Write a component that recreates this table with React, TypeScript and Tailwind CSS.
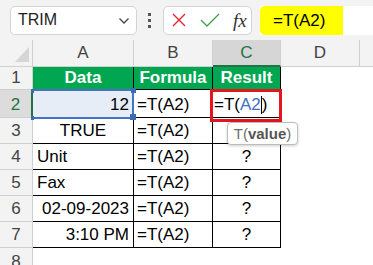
import React from "react";

const font = { fontFamily: '"Liberation Sans", Arial, sans-serif' };

type Row = { n: string; a: string; align: "left" | "center" | "right"; c: string; h: string };

const rows: Row[] = [
  { n: "3", a: "TRUE", align: "center", c: "", h: "h-[26px]" },
  { n: "4", a: "Unit", align: "left", c: "?", h: "h-[26px]" },
  { n: "5", a: "Fax", align: "left", c: "?", h: "h-[26px]" },
  { n: "6", a: "02-09-2023", align: "right", c: "?", h: "h-[26px]" },
  { n: "7", a: "3:10 PM", align: "right", c: "?", h: "h-[26px]" },
];

const alignCls = {
  left: "justify-start pl-[4px]",
  center: "justify-center",
  right: "justify-end pr-[4px]",
};

export default function App() {
  return (
    <div className="w-[373px] h-[265px] overflow-hidden bg-white text-black" style={font}>
      {/* Toolbar */}
      <div className="h-[40px] bg-[#f3f3f3] flex items-center pl-[10px]">
        <div className="w-[127px] h-[29px] bg-white border border-[#d4d4d4] rounded-[5px] flex items-center justify-between pl-[7px] pr-[6px]">
          <span className="text-[16px] leading-none text-[#222]">TRIM</span>
          <svg width="12" height="8" viewBox="0 0 12 8" className="mt-[2px]">
            <path d="M1.5 1.5 L6 6 L10.5 1.5" fill="none" stroke="#444" strokeWidth="1.3" />
          </svg>
        </div>
        <div className="ml-[10px] w-[4px] flex flex-col items-center gap-[3px]">
          <span className="w-[3px] h-[3px] bg-[#555] block" />
          <span className="w-[3px] h-[3px] bg-[#555] block" />
          <span className="w-[3px] h-[3px] bg-[#555] block" />
        </div>
        <div className="ml-[12px] w-[89px] h-[29px] bg-white border border-[#d4d4d4] rounded-[5px] flex items-center pl-[8px]">
          <svg width="14" height="14" viewBox="0 0 14 14">
            <path d="M1 1 L13 13 M13 1 L1 13" stroke="#e3262d" strokeWidth="1.4" />
          </svg>
          <svg width="20" height="14" viewBox="0 0 20 14" className="ml-[14px]">
            <path d="M1 7 L7 13 L19 1" fill="none" stroke="#3fa24b" strokeWidth="1.3" />
          </svg>
          <span
            className="ml-[13px] text-[19px] leading-none italic text-[#333]"
            style={{ fontFamily: '"Liberation Serif", "Times New Roman", serif' }}
          >
            fx
          </span>
        </div>
        <div className="ml-[8px] flex-1 h-[29px] bg-white flex">
          <div className="w-[83px] h-full bg-[#ffff00] rounded-l-[5px] flex items-center pl-[13px]">
            <span className="text-[17px] leading-none">=T(A2)</span>
          </div>
        </div>
      </div>

      {/* Column headers */}
      <div className="flex h-[27px] bg-[#f3f3f3] text-[17px] text-[#444]">
        <div className="w-[33px] h-full border-r border-b border-[#d0d0d0] relative">
          <svg width="14" height="15" viewBox="0 0 14 15" className="absolute right-[3px] bottom-[4px]">
            <path d="M14 0 L14 15 L0 15 Z" fill="#d6d6d6" />
          </svg>
        </div>
        <div className="w-[101px] h-full border-r border-b border-[#d0d0d0] flex items-center justify-center">A</div>
        <div className="w-[79px] h-full border-r border-b border-[#d0d0d0] flex items-center justify-center">B</div>
        <div className="w-[68px] h-full border-r border-[#d0d0d0] border-b-2 border-b-[#217346] bg-[#d6d6d6] text-[#217346] flex items-center justify-center">
          C
        </div>
        <div className="w-[79px] h-full border-r border-b border-[#d0d0d0] flex items-center justify-center">D</div>
        <div className="flex-1 h-full border-b border-[#d0d0d0]" />
      </div>

      {/* Row 1 */}
      <div className="flex h-[23px] text-[17px] leading-[20px]">
        <div className="w-[33px] h-full bg-[#f3f3f3] border-r border-b border-[#d0d0d0] text-[#444] flex items-end justify-center pb-[1px]">
          1
        </div>
        <div className="w-[101px] h-full bg-[#00a650] border-r border-b border-black text-white font-bold flex items-end justify-center pb-[1px]">
          Data
        </div>
        <div className="w-[79px] h-full bg-[#00a650] border-r border-b border-black text-white font-bold flex items-end justify-center pb-[1px]">
          Formula
        </div>
        <div className="w-[68px] h-full bg-[#00a650] border-r border-b border-black text-white font-bold flex items-end justify-center pb-[1px]">
          Result
        </div>
      </div>

      {/* Row 2 */}
      <div className="flex h-[28px] text-[17px] leading-[20px]">
        <div className="w-[33px] h-full bg-[#dcdcdc] border-r-2 border-r-[#217346] border-b border-b-[#d0d0d0] text-[#217346] flex items-end justify-center pb-[2px]">
          2
        </div>
        <div className="w-[101px] h-full bg-[#e6edf7] border-r border-b border-black flex items-end justify-end pr-[4px] pb-[2px] relative">
          12
          <div className="absolute -top-[1px] -left-[1px] w-[102px] h-[30px] border-t-2 border-r-2 border-b-2 border-[#4472c4]" />
          <div className="absolute -top-[1px] -left-[2px] w-[3px] h-[4px] bg-[#3b6bb5]" />
          <div className="absolute -bottom-[3px] -left-[2px] w-[3px] h-[4px] bg-[#3b6bb5]" />
          <div className="absolute -top-[2px] -right-[3px] w-[5px] h-[5px] bg-[#3b6bb5]" />
          <div className="absolute -bottom-[3px] -right-[3px] w-[6px] h-[6px] bg-[#3b6bb5]" />
        </div>
        <div className="w-[79px] h-full border-r border-b border-black flex items-end pl-[3px] pb-[2px]">=T(A2)</div>
        <div className="w-[68px] h-full border-r border-b border-black relative">
          <div className="absolute -top-[1px] -left-[3px] w-[72px] h-[33px] border-[3px] border-[#e3161d] z-10 flex items-end pl-[1px] pb-[4px]">
            <span>=T(</span>
            <span className="text-[#3d6fc4]">A2</span>
            <span className="w-[1px] h-[18px] bg-black mb-[1px]" />
            <span>)</span>
          </div>
          <div className="absolute top-[32px] left-[14px] w-[71px] h-[23px] bg-white border border-[#bdbdbd] rounded-[4px] shadow-[0_1px_3px_rgba(0,0,0,0.2)] z-20 flex items-center justify-center text-[15px] leading-none text-[#707070]">
            T(<span className="font-bold text-[#555]">value</span>)
          </div>
        </div>
      </div>

      {rows.map((r) => (
        <div key={r.n} className={`flex ${r.h} text-[17px] leading-[20px]`}>
          <div className="w-[33px] h-full bg-[#f3f3f3] border-r border-b border-[#d0d0d0] text-[#444] flex items-end justify-center pb-[2px]">
            {r.n}
          </div>
          <div className={`w-[101px] h-full border-r border-b border-black flex items-end pb-[2px] ${alignCls[r.align]}`}>
            {r.a}
          </div>
          <div className="w-[79px] h-full border-r border-b border-black flex items-end pl-[3px] pb-[2px]">=T(A2)</div>
          <div className="w-[68px] h-full border-r border-b border-black flex items-end justify-center pb-[2px]">{r.c}</div>
        </div>
      ))}

      {/* Row 8 */}
      <div className="flex h-[26px] text-[17px] leading-[20px]">
        <div className="w-[33px] h-full bg-[#f3f3f3] border-r border-[#d0d0d0] text-[#444] flex items-end justify-center pb-[2px]">
          8
        </div>
      </div>
    </div>
  );
}
